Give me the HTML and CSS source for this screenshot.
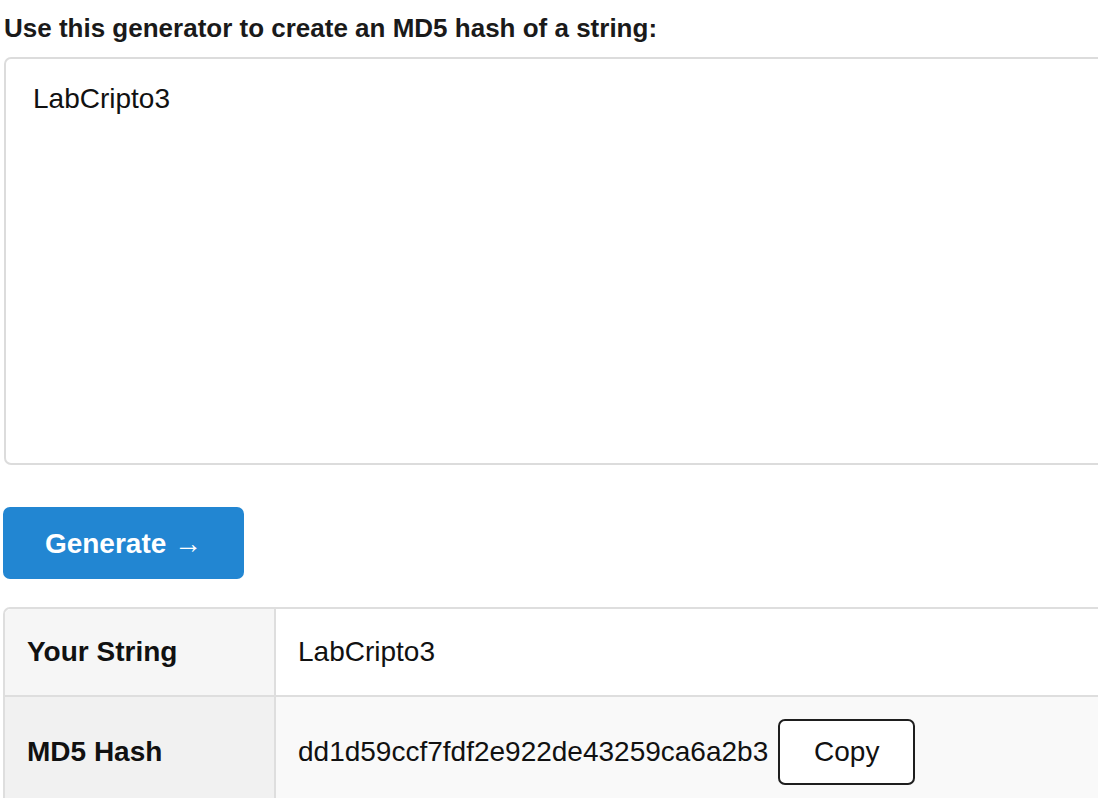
FILE: index.html
```html
<!DOCTYPE html>
<html>
<head>
<meta charset="utf-8">
<link rel="stylesheet" href="styles.css">
</head>
<body>
<div class="page">
  <label class="intro" for="src">Use this generator to create an MD5 hash of a string:</label>
  <textarea id="src" class="input">LabCripto3</textarea>
  <button class="generate">Generate →</button>
  <table class="result">
    <tr class="row-a">
      <th>Your String</th>
      <td>LabCripto3</td>
    </tr>
    <tr class="row-b">
      <th>MD5 Hash</th>
      <td><span class="hash">dd1d59ccf7fdf2e922de43259ca6a2b3</span><button class="copy">Copy</button></td>
    </tr>
  </table>
</div>
</body>
</html>
```
FILE: styles.css
```css
html, body {
  margin: 0;
  padding: 0;
  overflow: hidden;
  background: #fff;
}
.page {
  width: 1180px;
  padding: 12px 0 0 4px;
  font-family: "Liberation Sans", Arial, sans-serif;
  color: #111;
}
.intro {
  display: block;
  font-size: 26px;
  font-weight: bold;
  color: #1a1a1a;
  margin: 0 0 13px 0;
  line-height: 32px;
}
.input {
  display: block;
  box-sizing: border-box;
  width: 1160px;
  height: 408px;
  border: 2px solid #dcdcdc;
  border-radius: 7px;
  padding: 24px 27px;
  font-family: "Liberation Sans", Arial, sans-serif;
  font-size: 28px;
  color: #111;
  resize: none;
  outline: none;
  margin: 0;
}
.generate {
  display: block;
  margin: 42px 0 28px -1px;
  width: 241px;
  height: 72px;
  padding-top: 2px;
  border: none;
  border-radius: 7px;
  background: #2286d2;
  color: #fff;
  font-family: "Liberation Sans", Arial, sans-serif;
  font-size: 28px;
  font-weight: bold;
  cursor: pointer;
}
.result {
  margin-left: -1px;
  border-collapse: separate;
  border-spacing: 0;
  width: 1160px;
  border-top: 2px solid #dedede;
  border-left: 2px solid #dedede;
  border-radius: 7px 0 0 0;
  font-size: 28px;
}
.result th, .result td {
  text-align: left;
  padding: 0 22px;
  height: 86px;
  border-bottom: 2px solid #dedede;
}
.result th {
  width: 225px;
  border-right: 2px solid #dedede;
  font-weight: bold;
  color: #111;
}
.result td {
  font-weight: normal;
  color: #111;
}
.row-a th { background: #f6f6f6; border-top-left-radius: 6px; }
.row-a td { background: #fff; }
.row-b th { background: #f1f1f1; }
.row-b td { background: #f9f9f9; }
.row-b th, .row-b td { height: 110px; }
.hash { vertical-align: middle; }
.copy {
  vertical-align: middle;
  margin-left: 10px;
  width: 137px;
  height: 66px;
  background: #fff;
  border: 2px solid #1e1e1e;
  border-radius: 7px;
  font-family: "Liberation Sans", Arial, sans-serif;
  font-size: 28px;
  color: #111;
}
```
